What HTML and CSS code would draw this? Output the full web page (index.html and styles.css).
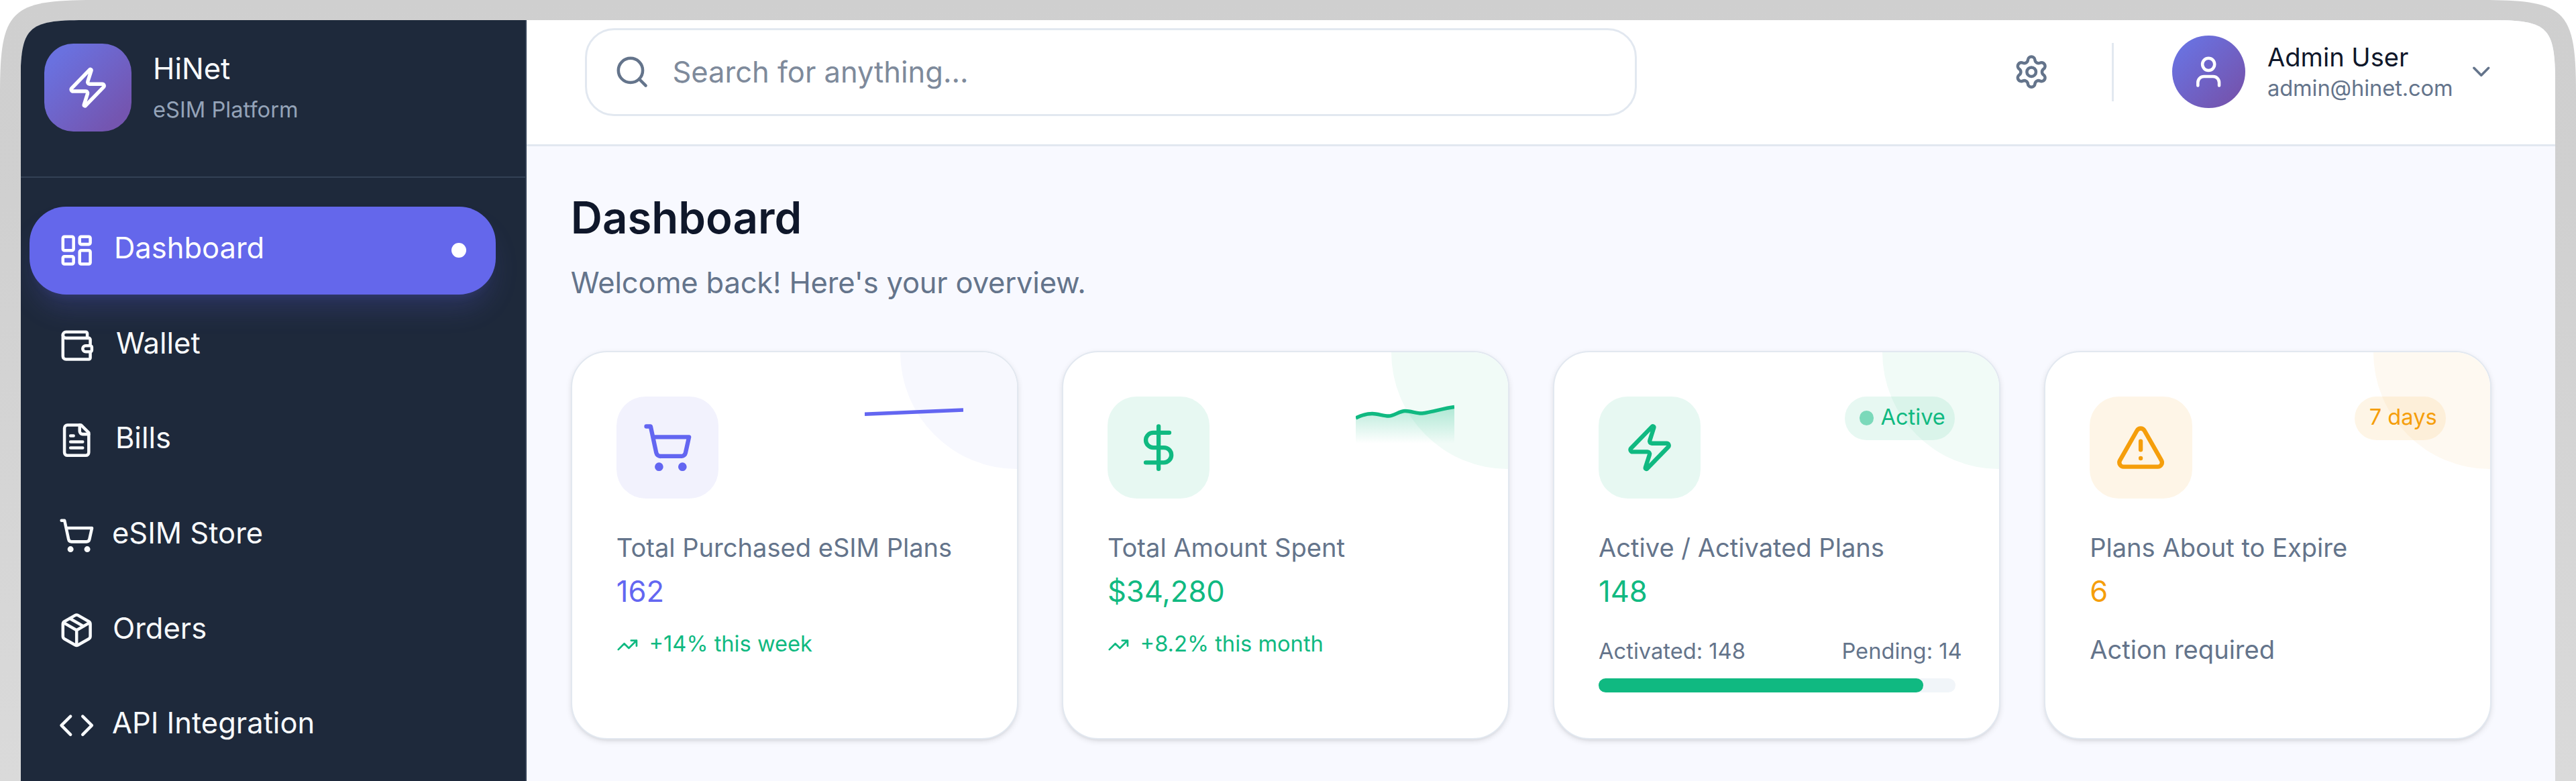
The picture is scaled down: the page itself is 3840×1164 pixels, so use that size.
FILE: index.html
```html
<!DOCTYPE html>
<html lang="en">
<head>
<meta charset="utf-8">
<title>HiNet eSIM Platform</title>
<link rel="stylesheet" href="styles.css">
</head>
<body>
<svg class="defs" width="0" height="0">
  <symbol id="zap" viewBox="0 0 24 24"><path d="M4 14a1 1 0 0 1-.78-1.63l9.9-10.2a.5.5 0 0 1 .86.46l-1.92 6.02A1 1 0 0 0 13 10h7a1 1 0 0 1 .78 1.63l-9.9 10.2a.5.5 0 0 1-.86-.46l1.92-6.02A1 1 0 0 0 11 14z"/></symbol>
  <symbol id="cart" viewBox="0 0 24 24"><circle cx="8" cy="21" r="1"/><circle cx="19" cy="21" r="1"/><path d="M2.05 2.05h2l2.66 12.42a2 2 0 0 0 2 1.58h9.78a2 2 0 0 0 1.95-1.57l1.65-7.43H5.12"/></symbol>
  <symbol id="trend" viewBox="0 0 24 24"><path d="M22 7l-8.5 8.5-5-5L2 17M16 7h6v6"/></symbol>
</svg>
<div class="frame">
  <div class="app">
    <aside class="sidebar">
      <div class="brand">
        <div class="logo"><svg class="icon i24"><use href="#zap"/></svg></div>
        <div class="brand-text">
          <div class="brand-name">HiNet</div>
          <div class="brand-sub">eSIM Platform</div>
        </div>
      </div>
      <nav class="nav">
        <a class="item active"><svg class="icon i20" viewBox="0 0 24 24"><rect width="7" height="9" x="3" y="3" rx="1"/><rect width="7" height="5" x="14" y="3" rx="1"/><rect width="7" height="9" x="14" y="12" rx="1"/><rect width="7" height="5" x="3" y="16" rx="1"/></svg><span class="label l-dashboard">Dashboard</span><i class="dot"></i></a>
        <a class="item"><svg class="icon i20" viewBox="0 0 24 24"><path d="M19 7V4a1 1 0 0 0-1-1H5a2 2 0 0 0 0 4h15a1 1 0 0 1 1 1v4h-3a2 2 0 0 0 0 4h3a1 1 0 0 0 1-1v-2a1 1 0 0 0-1-1"/><path d="M3 5v14a2 2 0 0 0 2 2h15a1 1 0 0 0 1-1v-4"/></svg><span class="label l-wallet">Wallet</span></a>
        <a class="item"><svg class="icon i20" viewBox="0 0 24 24"><path d="M15 2H6a2 2 0 0 0-2 2v16a2 2 0 0 0 2 2h12a2 2 0 0 0 2-2V7Z"/><path d="M14 2v4a2 2 0 0 0 2 2h4M10 9H8M16 13H8M16 17H8"/></svg><span class="label l-bills">Bills</span></a>
        <a class="item"><svg class="icon i20"><use href="#cart"/></svg><span class="label l-store">eSIM Store</span></a>
        <a class="item"><svg class="icon i20" viewBox="0 0 24 24"><path d="M11 21.73a2 2 0 0 0 2 0l7-4A2 2 0 0 0 21 16V8a2 2 0 0 0-1-1.73l-7-4a2 2 0 0 0-2 0l-7 4A2 2 0 0 0 3 8v8a2 2 0 0 0 1 1.73zM12 22V12M3.29 7L12 12l8.71-5M7.5 4.27l9 5.15"/></svg><span class="label l-orders">Orders</span></a>
        <a class="item"><svg class="icon i20" viewBox="0 0 24 24"><path d="M16 18l6-6-6-6M8 6l-6 6 6 6"/></svg><span class="label l-api">API Integration</span></a>
      </nav>
    </aside>
    <div class="content">
      <header class="topbar">
        <div class="search"><svg class="icon i20" viewBox="0 0 24 24"><circle cx="11" cy="11" r="8"/><path d="M21 21l-4.34-4.34"/></svg><span class="placeholder">Search for anything...</span></div>
        <div class="tools">
          <svg class="icon i20 gear" viewBox="0 0 24 24"><path d="M9.671 4.136a2.34 2.34 0 0 1 4.659 0 2.34 2.34 0 0 0 3.319 1.915 2.34 2.34 0 0 1 2.33 4.033 2.34 2.34 0 0 0 0 3.831 2.34 2.34 0 0 1-2.33 4.033 2.34 2.34 0 0 0-3.319 1.915 2.34 2.34 0 0 1-4.659 0 2.34 2.34 0 0 0-3.32-1.915 2.34 2.34 0 0 1-2.33-4.033 2.34 2.34 0 0 0 0-3.831A2.34 2.34 0 0 1 6.35 6.051a2.34 2.34 0 0 0 3.319-1.915"/><circle cx="12" cy="12" r="3"/></svg>
          <div class="divider"></div>
          <div class="avatar"><svg class="icon i20" viewBox="0 0 24 24"><path d="M19 21v-2a4 4 0 0 0-4-4H9a4 4 0 0 0-4 4v2"/><circle cx="12" cy="7" r="4"/></svg></div>
          <div class="user">
            <div class="user-name">Admin User</div>
            <div class="user-mail">admin@hinet.com</div>
          </div>
          <svg class="icon i16" viewBox="0 0 24 24"><path d="M6 9l6 6 6-6"/></svg>
        </div>
      </header>
      <main class="main">
        <h1>Dashboard</h1>
        <p class="welcome">Welcome back! Here's your overview.</p>
        <section class="cards">
          <article class="card indigo">
            <div class="blob"></div>
            <div class="card-top">
              <div class="tile"><svg class="icon i28"><use href="#cart"/></svg></div>
              <svg class="spark" viewBox="0 0 147 70"><path class="line" d="M0 26.3L147 20"/></svg>
            </div>
            <div class="title">Total Purchased eSIM Plans</div>
            <div class="value">162</div>
            <div class="trend"><svg class="icon i12"><use href="#trend"/></svg><span>+14% this week</span></div>
          </article>
          <article class="card green">
            <div class="blob"></div>
            <div class="card-top">
              <div class="tile"><svg class="icon i28" viewBox="0 0 24 24"><path d="M12 2v20M17 5H9.500a3.500 3.500 0 0 0 0 7h5a3.500 3.500 0 0 1 0 7H6"/></svg></div>
              <svg class="spark" viewBox="0 0 147 70">
                <linearGradient id="fade" x1="0" y1="15" x2="0" y2="70" gradientUnits="userSpaceOnUse"><stop offset="0" stop-color="#10b981" stop-opacity=".3"/><stop offset="1" stop-color="#10b981" stop-opacity="0"/></linearGradient>
                <path fill="url(#fade)" d="M0 32C8 28 16 25.500 24.500 25.500S41 29 49 29S65 21.500 73.500 21.500S90 25 98 25S131 17.500 147 15.500V70H0Z"/>
                <path class="line" d="M0 32C8 28 16 25.500 24.500 25.500S41 29 49 29S65 21.500 73.500 21.500S90 25 98 25S131 17.500 147 15.500"/>
              </svg>
            </div>
            <div class="title">Total Amount Spent</div>
            <div class="value">$34,280</div>
            <div class="trend"><svg class="icon i12"><use href="#trend"/></svg><span>+8.2% this month</span></div>
          </article>
          <article class="card green">
            <div class="blob"></div>
            <div class="card-top">
              <div class="tile"><svg class="icon i28"><use href="#zap"/></svg></div>
              <div class="badge status"><i class="badge-dot"></i><span>Active</span></div>
            </div>
            <div class="title">Active / Activated Plans</div>
            <div class="value">148</div>
            <div class="counts"><span>Activated: 148</span><span class="pending">Pending: 14</span></div>
            <div class="track"><div class="fill" style="width:91%"></div></div>
          </article>
          <article class="card amber">
            <div class="blob"></div>
            <div class="card-top">
              <div class="tile"><svg class="icon i28" viewBox="0 0 24 24"><path d="M21.730 18l-8-14a2 2 0 0 0-3.480 0l-8 14A2 2 0 0 0 4 21h16a2 2 0 0 0 1.730-3M12 9v4M12 17h.01"/></svg></div>
              <div class="badge days"><span>7 days</span></div>
            </div>
            <div class="title">Plans About to Expire</div>
            <div class="value">6</div>
            <div class="note">Action required</div>
          </article>
        </section>
      </main>
    </div>
  </div>
</div>
</body>
</html>
```
FILE: styles.css
```css
* { box-sizing: border-box; }
body { margin: 0; width: 3840px; height: 1164px; overflow: hidden; background: #fff; font-family: Inter, "Liberation Sans", sans-serif; font-weight: 390; }
.defs { position: absolute; }
.frame { height: 1164px; padding: 30px 31px 0 30.500px; overflow: hidden; background: linear-gradient(#cfcfcf 0, #d0d0d0 300px, #dadada 1164px); clip-path: path("M0 1164V140C0 15 15 0 140 0H3700C3825 0 3840 15 3840 140V1164Z"); }
.app { display: flex; height: 1134px; overflow: hidden; background: #f8f9ff; clip-path: path("M0 1134V95C0 10 10 0 95 0H3683.500C3768.500 0 3778.500 10 3778.500 95V1134Z"); }
.icon { flex: none; fill: none; stroke: currentColor; stroke-width: 2; stroke-linecap: round; stroke-linejoin: round; }
.i12 { width: 32.650px; height: 32.650px; }
.i16 { width: 43.500px; height: 43.500px; }
.i20 { width: 54.400px; height: 54.400px; }
.i24 { width: 65.300px; height: 65.300px; }
.i28 { width: 76.200px; height: 76.200px; }

.sidebar { flex: none; width: 754.500px; background: #1e293b; border-right: 2.700px solid #334155; color: #f8fafc; }
.brand { display: flex; height: 234.500px; padding: 35px 35px 0; gap: 32px; border-bottom: 2.700px solid #334155; }
.logo { display: flex; align-items: center; justify-content: center; flex: none; width: 130.600px; height: 130.600px; border-radius: 43.500px; color: #fff; background: linear-gradient(135deg, #6a71df 15%, #7455b0 85%); }
.brand-name { margin-top: 4px; font-size: 43.500px; line-height: 66px; }
.brand-sub { font-size: 32.650px; line-height: 48px; margin-top: 4px; color: #94a3b8; }
.nav { display: flex; flex-direction: column; gap: 11px; padding: 43.500px 44.500px 0 13.500px; }
.item { display: flex; align-items: center; height: 130.600px; padding: 0 43.500px 0 42.500px; border-radius: 54.400px; }
.active { color: #fff; background: #6467eb; box-shadow: 0 27px 41px -8px rgba(99,102,241,.2), 0 11px 16px -11px rgba(99,102,241,.2); }
.label { font-size: 43.500px; line-height: 66px; margin-bottom: 8px; }
.l-dashboard { margin-left: 29px; }
.l-wallet { margin-left: 32px; }
.l-bills { margin-left: 31px; }
.l-store { margin-left: 26px; }
.l-orders { margin-left: 27px; }
.l-api { margin-left: 26px; }
.dot { width: 21.800px; height: 21.800px; border-radius: 50%; background: #fff; margin-left: auto; }

.content { flex: 1; min-width: 0; }
.topbar { display: flex; align-items: flex-start; justify-content: space-between; height: 188px; padding: 11.500px 88.500px 0 87px; background: #fff; border-bottom: 3px solid #e2e8f0; color: #64748b; }
.search { display: flex; align-items: center; gap: 33px; width: 1568px; height: 131px; padding-left: 40px; border: 3.500px solid #e2e8f0; border-radius: 43.500px; }
.placeholder { font-size: 43.500px; color: #7e8a9b; }
.tools { display: flex; align-items: center; height: 131px; }
.divider { width: 2.700px; height: 87px; margin: 0 87px 0 93px; background: #e2e8f0; }
.avatar { display: flex; align-items: center; justify-content: center; width: 108.900px; height: 108.900px; border-radius: 50%; color: #fff; background: linear-gradient(135deg, #6a71df 15%, #7455b0 85%); }
.user { width: 297px; margin: 0 0 0 33px; }
.user-name { font-size: 38.100px; line-height: 48px; color: #0f172a; }
.user-mail { font-size: 32.650px; line-height: 44px; letter-spacing: -.1px; }

.main { padding: 65.300px 95px 0 65.800px; }
h1 { margin: 1px 0 0; font-size: 65.300px; line-height: 82px; font-weight: 600; color: #0f172a; }
.welcome { margin: 25px 0 72px; font-size: 43.500px; line-height: 60px; color: #64748b; letter-spacing: -.18px; }
.cards { display: grid; grid-template-columns: repeat(4, 1fr); gap: 65.300px; }
.card { position: relative; height: 579px; padding: 65.300px 65.300px 0 66px; overflow: hidden; background: #fff; border: 2.720px solid #e2e8f0; border-radius: 54.400px; box-shadow: 0 3px 8px rgba(0,0,0,.1), 0 3px 5px -3px rgba(0,0,0,.1); }
.indigo { --tone: #6366f1; --tint: #f2f2fd; --soft: #f7f8fe; }
.green { --tone: #10b981; --tint: #e7f8f2; --soft: #f1fbf7; }
.amber { --tone: #f59e0b; --tint: #fef5e7; --soft: #fef9f1; }
.blob { position: absolute; top: -174px; right: -174px; width: 348px; height: 348px; border-radius: 50%; background: var(--soft); }
.card-top { position: relative; display: flex; align-items: flex-start; justify-content: space-between; height: 152.400px; }
.tile { display: flex; align-items: center; justify-content: center; width: 152.400px; height: 152.400px; border-radius: 43.500px; color: var(--tone); background: var(--tint); }
.spark { width: 147px; height: 70px; margin-right: 14px; }
.line { fill: none; stroke: var(--tone); stroke-width: 5.400; }
.badge { display: flex; align-items: center; height: 65.300px; margin-right: 1px; border-radius: 33px; font-size: 32.650px; color: var(--tone); background: color-mix(in srgb, var(--tone) 10%, transparent); }
.badge span { margin-bottom: 5px; }
.status { width: 164px; padding-left: 22px; gap: 10px; }
.days { width: 136px; padding-left: 22px; }
.badge-dot { width: 21.800px; height: 21.800px; border-radius: 50%; background: var(--tone); opacity: .5; }
.title { margin-top: 46px; font-size: 38.100px; line-height: 54.400px; color: #64748b; white-space: nowrap; }
.value { margin-top: 6px; font-size: 43.500px; line-height: 65.300px; color: var(--tone); }
.trend { display: flex; align-items: center; gap: 16px; margin-top: 22px; font-size: 32.650px; line-height: 44px; color: #10b981; }
.trend svg { margin-top: 5px; }
.counts { display: flex; justify-content: space-between; margin: 33px -10px 0 0; font-size: 32.650px; line-height: 44px; color: #64748b; white-space: nowrap; }
.track { height: 21.800px; margin-top: 19px; border-radius: 11px; background: #f1f5f9; }
.fill { height: 100%; border-radius: 11px; background: #10b981; }
.note { margin-top: 26px; font-size: 38.100px; line-height: 54.400px; color: #64748b; }
```
